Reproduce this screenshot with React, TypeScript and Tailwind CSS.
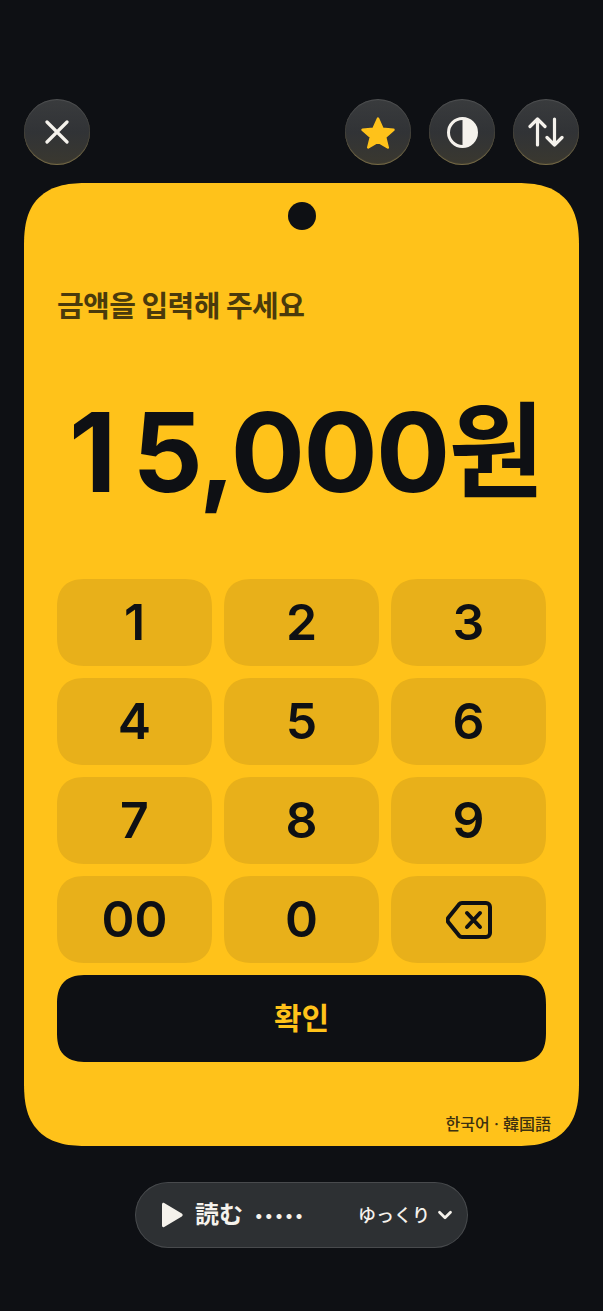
import { ChevronDown } from 'lucide-react'

const fontStack = "font-['Inter','Noto_Sans_CJK_KR',sans-serif]"
const keys = ['1', '2', '3', '4', '5', '6', '7', '8', '9', '00', '0']

function RoundButton({ children }: { children: React.ReactNode }) {
  return (
    <button className="w-[66px] h-[66px] rounded-full flex items-center justify-center bg-gradient-to-b from-[#393b3d] via-[#313336] to-[#3a382f] shadow-[inset_0_1px_1px_rgba(255,255,255,0.12),inset_0_-1px_1px_rgba(255,220,120,0.35)]">
      {children}
    </button>
  )
}

export default function App() {
  return (
    <div className={`${fontStack} w-[603px] h-[1311px] bg-[#0e1014] px-6 pt-[99px] overflow-hidden`}>
      {/* Top buttons */}
      <div className="flex justify-between">
        <RoundButton>
          <svg width="24" height="24" viewBox="0 0 24 24" fill="none" stroke="#f5f2ec" strokeWidth="3.2" strokeLinecap="round">
            <path d="M2 2l20 20M22 2L2 22" />
          </svg>
        </RoundButton>
        <div className="flex gap-[18px]">
          <RoundButton>
            <svg width="34" height="33" viewBox="0 0 34 33" fill="#ffc21a" stroke="#ffc21a" strokeWidth="2.4" strokeLinejoin="round">
              <path d="M17 2.5l4.6 10.3 10.9 1-8.3 7.2 2.6 10.5-9.8-5.7-9.8 5.7 2.6-10.5-8.3-7.2 10.9-1z" />
            </svg>
          </RoundButton>
          <RoundButton>
            <svg width="31" height="31" viewBox="0 0 31 31">
              <circle cx="15.5" cy="15.5" r="14" fill="none" stroke="#f5f2ec" strokeWidth="3" />
              <path d="M15.5 1.5a14 14 0 0 1 0 28z" fill="#f5f2ec" />
            </svg>
          </RoundButton>
          <RoundButton>
            <svg width="36" height="30" viewBox="0 0 36 30" fill="none" stroke="#f5f2ec" strokeWidth="3.2" strokeLinecap="round" strokeLinejoin="round">
              <path d="M9.5 28V2M2 9.5L9.5 2 17 9.5" />
              <path d="M26.5 2v26M19 20.5L26.5 28 34 20.5" />
            </svg>
          </RoundButton>
        </div>
      </div>

      {/* Yellow card */}
      <div className="mt-[18px] h-[963px] bg-[#ffc21a] rounded-[64px] [corner-shape:superellipse(1.4)] px-[33px] pt-[19px] flex flex-col">
        <div className="w-[28px] h-[28px] rounded-full bg-[#0e1014] self-center shrink-0" />
        <div className="mt-[57px] text-[29px] leading-[40px] font-bold text-[#4a3a0c] tracking-[-0.6px]">
          금액을 입력해 주세요
        </div>
        <div className="mt-[58px] h-[134px] pl-[12px] flex items-center whitespace-nowrap text-[110px] leading-none font-bold text-[#0e1014]">
          <span className="mr-[16px]">1</span>
          <span className="tracking-[-1.5px]">5,000</span>
          <span className="text-[104px]">원</span>
        </div>

        {/* Keypad */}
        <div className="mt-[60px] grid grid-cols-3 gap-3">
          {keys.map((k) => (
            <button
              key={k}
              className="h-[87px] rounded-[30px] [corner-shape:superellipse(1.4)] bg-[#e8b01a] flex items-center justify-center text-[50px] font-semibold text-[#0e1014]"
            >
              {k}
            </button>
          ))}
          <button className="h-[87px] rounded-[30px] [corner-shape:superellipse(1.4)] bg-[#e8b01a] flex items-center justify-center">
            <svg width="46" height="40" viewBox="0 0 46 40" fill="none" stroke="#0e1014" strokeWidth="4" strokeLinejoin="round" strokeLinecap="round">
              <path d="M16 3h24a4 4 0 0 1 4 4v26a4 4 0 0 1-4 4H16a4 4 0 0 1-3-1.4L2.5 22.5a4 4 0 0 1 0-5L13 4.4A4 4 0 0 1 16 3z" />
              <path d="M21 13l13 14M34 13L21 27" />
            </svg>
          </button>
        </div>

        <button className="mt-3 h-[87px] rounded-[30px] [corner-shape:superellipse(1.4)] bg-[#0e1014] text-[#ffc21a] text-[30px] font-bold">
          확인
        </button>

        <div className="mt-[50px] -mr-[5px] text-right text-[16px] leading-[24px] font-medium text-[#3d3110]">
          한국어 · 韓国語
        </div>
      </div>

      {/* Read aloud pill */}
      <div className="mt-9 mx-auto w-[333px] h-[66px] rounded-full bg-[#2d3033] shadow-[inset_0_0_0_1px_rgba(255,255,255,0.13)] flex items-center pl-[26px] pr-[12px] text-[#f5f2ec] font-['Inter','Noto_Sans_CJK_JP',sans-serif]">
        <svg width="22" height="26" viewBox="0 0 22 26" fill="#f5f2ec">
          <path d="M1 2.5c0-1.5 1.2-2 2.2-1.4l17.6 10.4c1.2.7 1.2 2.3 0 3L3.2 24.9C2.2 25.5 1 25 1 23.5z" />
        </svg>
        <span className="ml-[12px] text-[24px] font-bold">読む</span>
        <span className="ml-[12px] text-[16px] tracking-[2.5px] font-bold">•••••</span>
        <span className="ml-auto text-[18px] font-medium">ゆっくり</span>
        <ChevronDown className="ml-[4px] w-[22px] h-[22px]" strokeWidth={3} />
      </div>
    </div>
  )
}
